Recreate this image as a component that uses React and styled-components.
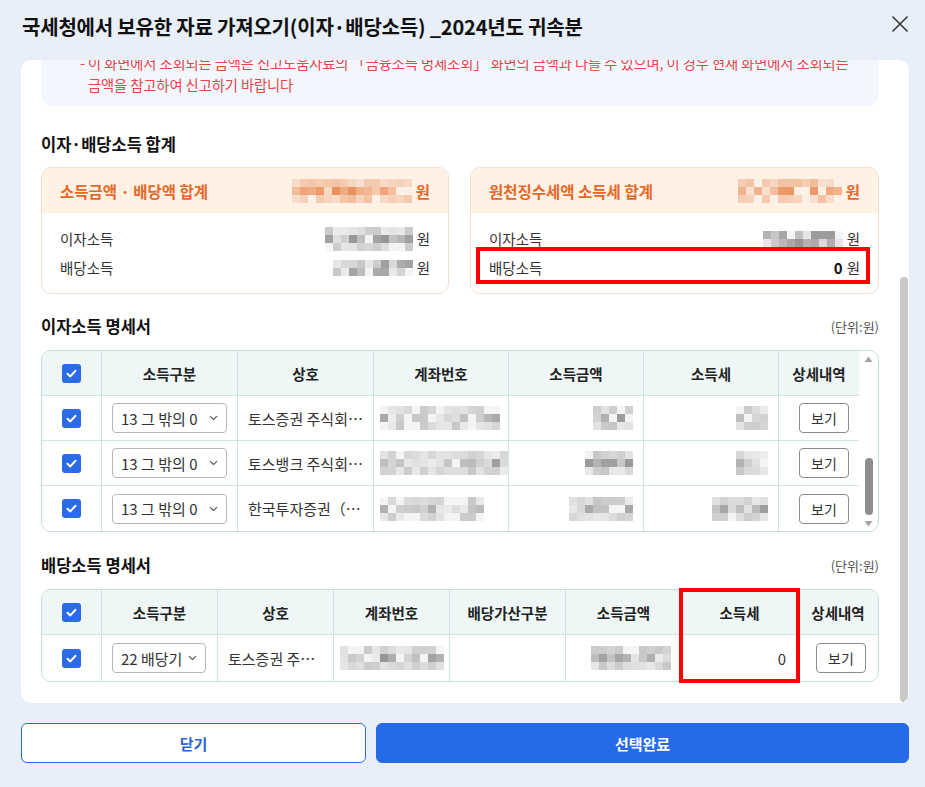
import React from 'react';
import styled, { createGlobalStyle } from 'styled-components';

const GlobalStyle = createGlobalStyle`
  html, body { margin: 0; padding: 0; }
  body {
    background: #e9eff9;
    font-family: "Noto Sans CJK KR", "Noto Sans", sans-serif;
    color: #222;
  }
  * { box-sizing: border-box; }
`;

const Modal = styled.div`
  width: 925px;
  height: 787px;
  display: flex;
  flex-direction: column;
  padding: 0 16px 0 21px;
`;

const Header = styled.header`
  height: 52px;
  margin-bottom: 8px;
  display: flex;
  align-items: center;
  justify-content: space-between;
  padding-left: 1px;
`;

const Title = styled.h1`
  margin: 0;
  font-size: 20px;
  font-weight: 700;
  color: #111;
  letter-spacing: -0.2px;
`;

const CloseBtn = styled.button`
  border: 0;
  background: none;
  padding: 0;
  width: 20px;
  height: 20px;
  margin: -4px -1px 0 0;
  display: flex;
  align-items: center;
  justify-content: center;
`;

const Panel = styled.div`
  height: 643px;
  background: #fff;
  border-radius: 10px;
  overflow: hidden;
  display: flex;
`;

const Viewport = styled.div`
  flex: 1;
  min-width: 0;
  display: flex;
  flex-direction: column;
  justify-content: flex-end;
  overflow: hidden;
  padding: 0 20px 21px 20px;
`;

const PanelRail = styled.div`
  width: 10px;
  display: flex;
  flex-direction: column;
  justify-content: flex-end;
  padding: 0 1px 1px;
`;

const PanelThumb = styled.div`
  height: 425px;
  border-radius: 4px;
  background: #c9c9c9;
`;

const Notice = styled.div`
  flex-shrink: 0;
  background: #f3f6fc;
  border-radius: 12px;
  padding: 16px 20px 10px 39px;
`;

const NoticeLine = styled.p`
  margin: 0;
  font-size: 14.3px;
  line-height: 22px;
  color: #e2474b;
  padding-left: 8px;
  text-indent: -8px;
  letter-spacing: -0.1px;
`;

const SectionTitle = styled.h2`
  margin: 26px 0 11px;
  font-size: 16.5px;
  line-height: 24px;
  font-weight: 700;
  color: #111;
`;

const SectionHead = styled.div`
  flex-shrink: 0;
  display: flex;
  align-items: center;
  justify-content: space-between;
  margin: ${p => p.$mt}px 0 12px;
  height: 24px;
  & > h2 { margin: 0; }
`;

const Unit = styled.span`
  font-size: 13px;
  color: #555;
`;

const CardGrid = styled.div`
  flex-shrink: 0;
  display: grid;
  grid-template-columns: 408px 1fr;
  gap: 21px;
`;

const Card = styled.div`
  border: 1px solid #f0dfd0;
  border-radius: 10px;
  overflow: hidden;
`;

const CardHead = styled.div`
  height: 45px;
  background: #fff1e4;
  display: flex;
  align-items: center;
  justify-content: space-between;
  padding: 0 18px;
  color: #e4692a;
  font-size: 15.5px;
  font-weight: 700;
`;

const CardBody = styled.div`
  padding: 11px 18px 11px;
`;

const CardRow = styled.div`
  position: relative;
  height: 29px;
  display: flex;
  align-items: center;
  justify-content: space-between;
  font-size: 14.5px;
  color: #333;
`;

const Amount = styled.span`
  display: flex;
  align-items: center;
  gap: 4px;
`;

const Strong = styled.b`
  font-weight: 700;
  font-size: 15px;
  color: #111;
`;

const Highlight = styled.span`
  position: absolute;
  border: 4px solid #ff0000;
  pointer-events: none;
  top: ${p => p.$top}px;
  left: ${p => p.$left}px;
  right: ${p => p.$right}px;
  bottom: ${p => p.$bottom}px;
`;

const ColHighlight = styled.span`
  position: absolute;
  border: 4px solid #ff0000;
  pointer-events: none;
  top: -1px;
  left: 638px;
  width: 121px;
  height: 95px;
`;

const TableWrap = styled.div`
  flex-shrink: 0;
  position: relative;
`;

const TableFrame = styled.div`
  border: 1px solid #c6dcdc;
  border-radius: 10px;
  overflow: hidden;
  display: flex;
`;

const Rows = styled.div`
  flex: 1;
  display: flex;
  flex-direction: column;
`;

const Row = styled.div`
  display: grid;
  grid-template-columns: ${p => p.$cols};
  height: ${p => p.$h}px;
  border-bottom: 1px solid #d1e2e2;
  background: ${p => (p.$head ? '#eef7f6' : '#fff')};
  &:last-child { border-bottom: 0; }
`;

const Cell = styled.div`
  display: flex;
  align-items: center;
  justify-content: ${p => p.$align || 'center'};
  padding: ${p => p.$pad || '0 10px'};
  border-right: 1px solid #d1e2e2;
  overflow: hidden;
  white-space: nowrap;
  font-size: ${p => (p.$head ? '14.5px' : '15px')};
  font-weight: ${p => (p.$head ? 700 : 400)};
  color: ${p => (p.$head ? '#222' : '#333')};
  &:last-child { border-right: 0; }
`;

const Rail = styled.div`
  width: 19px;
  display: flex;
  flex-direction: column;
  align-items: center;
  background: #fff;
  padding: 5px 0 4px;
`;

const Thumb = styled.div`
  margin-top: auto;
  margin-bottom: 5px;
  width: 8px;
  height: 57px;
  border-radius: 4px;
  background: #8d8d8d;
`;

const Box = styled.span`
  width: 19px;
  height: 19px;
  border-radius: 3px;
  background: #2c6be6;
  display: flex;
  align-items: center;
  justify-content: center;
`;

const SelectBox = styled.div`
  width: ${p => p.$w}px;
  height: 30px;
  border: 1px solid #b6b6b6;
  border-radius: 4px;
  background: #fff;
  display: flex;
  align-items: center;
  justify-content: space-between;
  padding: 0 8px 0 8px;
  font-size: 15px;
  color: #333;
`;

const DetailBtn = styled.button`
  width: 50px;
  height: 30px;
  border: 1px solid #8c8c8c;
  border-radius: 4px;
  background: #fff;
  font-family: inherit;
  font-size: 14px;
  color: #333;
  padding: 0;
`;

const MosaicGrid = styled.span`
  display: grid;
  grid-template-columns: repeat(${p => p.$cols}, ${p => p.$cell}px);
  grid-auto-rows: ${p => p.$cell}px;
`;

const Footer = styled.div`
  display: grid;
  grid-template-columns: 345px 1fr;
  gap: 10px;
  padding-top: 20px;
`;

const FooterBtn = styled.button`
  height: 40px;
  border-radius: 6px;
  font-family: inherit;
  font-size: 15px;
  font-weight: 700;
  border: 1px solid #2a6be4;
  background: ${p => (p.$primary ? '#256be8' : '#fff')};
  color: ${p => (p.$primary ? '#fff' : '#2a63d3')};
`;

function rnd(seed, i) {
  const x = Math.sin(seed * 9301 + i * 49297 + 0.5) * 233280;
  return x - Math.floor(x);
}

function Mosaic({ w, h, cell = 8, tone = 'gray', seed = 1 }) {
  const cols = Math.max(1, Math.round(w / cell));
  const rows = Math.max(1, Math.round(h / cell));
  const cells = [];
  for (let r = 0; r < rows; r++) {
    for (let c = 0; c < cols; c++) {
      const i = r * cols + c;
      const a = rnd(seed, i);
      const b = rnd(seed + 7, i);
      const edge = rows > 2 && (r === 0 || r === rows - 1) ? 0.4 : 0.9;
      let bg;
      if (b < 0.12) {
        bg = tone === 'orange' ? '#fdf0e6' : '#f3f4f5';
      } else if (tone === 'orange') {
        const t = a * edge;
        const R = Math.round(249 + (233 - 249) * t);
        const G = Math.round(226 + (135 - 226) * t);
        const B = Math.round(210 + (79 - 210) * t);
        bg = `rgb(${R},${G},${B})`;
      } else {
        const t = a * edge;
        const v = Math.round(236 - t * 95);
        bg = `rgb(${v},${v},${v + 3})`;
      }
      cells.push(<span key={i} style={{ background: bg }} />);
    }
  }
  return (
    <MosaicGrid $cols={cols} $cell={cell}>
      {cells}
    </MosaicGrid>
  );
}

const Check = () => (
  <Box>
    <svg width="13" height="13" viewBox="0 0 13 13">
      <path d="M2.5 6.8 L5.3 9.4 L10.5 3.8" fill="none" stroke="#fff" strokeWidth="2" strokeLinecap="round" strokeLinejoin="round" />
    </svg>
  </Box>
);

const Chevron = () => (
  <svg width="9" height="6" viewBox="0 0 9 6">
    <path d="M1 1.2 L4.5 4.5 L8 1.2" fill="none" stroke="#555" strokeWidth="1.1" />
  </svg>
);

const Select = ({ w, text }) => (
  <SelectBox $w={w}>
    <span>{text}</span>
    <Chevron />
  </SelectBox>
);

const Tri = ({ up }) => (
  <svg width="9" height="7" viewBox="0 0 9 7">
    <path d={up ? 'M4.5 0.5 L8.5 6 L0.5 6 Z' : 'M0.5 1 L8.5 1 L4.5 6.5 Z'} fill="#a3a3a3" />
  </svg>
);

const COLS1 = '60px 136px 136px 135px 135px 135px 80px';
const COLS2 = '60px 116px 116px 116px 116px 116px 116px 80px';

const interestRows = [
  { name: '토스증권 주식회…', acc: 120, accS: 11, amt: 42, amtS: 21, tax: 28, taxS: 31 },
  { name: '토스뱅크 주식회…', acc: 124, accS: 12, amt: 46, amtS: 22, tax: 32, taxS: 32 },
  { name: '한국투자증권（…', acc: 104, accS: 13, amt: 64, amtS: 23, tax: 56, taxS: 33 },
];

export default function App() {
  return (
    <>
      <GlobalStyle />
      <Modal>
        <Header>
          <Title>국세청에서 보유한 자료 가져오기(이자·배당소득) _2024년도 귀속분</Title>
          <CloseBtn aria-label="닫기">
            <svg width="18" height="18" viewBox="0 0 18 18">
              <path d="M1.5 1.5 L16.5 16.5 M16.5 1.5 L1.5 16.5" stroke="#333" strokeWidth="1.5" fill="none" />
            </svg>
          </CloseBtn>
        </Header>

        <Panel>
          <Viewport>
            <Notice>
              <NoticeLine>
                - 이 화면에서 조회되는 금액은 신고도움자료의 「금융소득 명세조회」 화면의 금액과 다를 수 있으며, 이 경우 현재 화면에서 조회되는
                <br />
                금액을 참고하여 신고하기 바랍니다
              </NoticeLine>
            </Notice>

            <SectionTitle>이자·배당소득 합계</SectionTitle>
            <CardGrid>
              <Card>
                <CardHead>
                  <span>소득금액 · 배당액 합계</span>
                  <Amount>
                    <Mosaic w={120} h={24} tone="orange" seed={3} />
                    <span>원</span>
                  </Amount>
                </CardHead>
                <CardBody>
                  <CardRow>
                    <span>이자소득</span>
                    <Amount>
                      <Mosaic w={88} h={24} seed={4} />
                      <span>원</span>
                    </Amount>
                  </CardRow>
                  <CardRow>
                    <span>배당소득</span>
                    <Amount>
                      <Mosaic w={80} h={16} seed={5} />
                      <span>원</span>
                    </Amount>
                  </CardRow>
                </CardBody>
              </Card>
              <Card>
                <CardHead>
                  <span>원천징수세액 소득세 합계</span>
                  <Amount>
                    <Mosaic w={104} h={24} tone="orange" seed={6} />
                    <span>원</span>
                  </Amount>
                </CardHead>
                <CardBody>
                  <CardRow>
                    <span>이자소득</span>
                    <Amount>
                      <Mosaic w={80} h={16} seed={8} />
                      <span>원</span>
                    </Amount>
                  </CardRow>
                  <CardRow>
                    <span>배당소득</span>
                    <Amount>
                      <Strong>0</Strong>
                      <span>원</span>
                    </Amount>
                    <Highlight $top={-6} $left={-13} $right={-10} $bottom={-2} />
                  </CardRow>
                </CardBody>
              </Card>
            </CardGrid>

            <SectionHead $mt={20}>
              <SectionTitle as="h2">이자소득 명세서</SectionTitle>
              <Unit>(단위:원)</Unit>
            </SectionHead>
            <TableWrap>
              <TableFrame>
                <Rows>
                  <Row $cols={COLS1} $h={45} $head>
                    <Cell $head><Check /></Cell>
                    <Cell $head>소득구분</Cell>
                    <Cell $head>상호</Cell>
                    <Cell $head>계좌번호</Cell>
                    <Cell $head>소득금액</Cell>
                    <Cell $head>소득세</Cell>
                    <Cell $head>상세내역</Cell>
                  </Row>
                  {interestRows.map((r, i) => (
                    <Row key={i} $cols={COLS1} $h={45}>
                      <Cell><Check /></Cell>
                      <Cell><Select w={115} text="13 그 밖의 0" /></Cell>
                      <Cell $align="flex-start">{r.name}</Cell>
                      <Cell $align="flex-start" $pad="0 6px"><Mosaic w={r.acc} h={24} seed={r.accS} /></Cell>
                      <Cell $align="flex-end"><Mosaic w={r.amt} h={24} seed={r.amtS} /></Cell>
                      <Cell $align="flex-end"><Mosaic w={r.tax} h={24} seed={r.taxS} /></Cell>
                      <Cell $align="flex-end"><DetailBtn>보기</DetailBtn></Cell>
                    </Row>
                  ))}
                </Rows>
                <Rail>
                  <Tri up />
                  <Thumb />
                  <Tri />
                </Rail>
              </TableFrame>
            </TableWrap>

            <SectionHead $mt={21}>
              <SectionTitle as="h2">배당소득 명세서</SectionTitle>
              <Unit>(단위:원)</Unit>
            </SectionHead>
            <TableWrap>
              <TableFrame>
                <Rows>
                  <Row $cols={COLS2} $h={45} $head>
                    <Cell $head><Check /></Cell>
                    <Cell $head>소득구분</Cell>
                    <Cell $head>상호</Cell>
                    <Cell $head>계좌번호</Cell>
                    <Cell $head>배당가산구분</Cell>
                    <Cell $head>소득금액</Cell>
                    <Cell $head>소득세</Cell>
                    <Cell $head>상세내역</Cell>
                  </Row>
                  <Row $cols={COLS2} $h={46}>
                    <Cell><Check /></Cell>
                    <Cell $align="flex-start"><Select w={94} text="22 배당기" /></Cell>
                    <Cell $align="flex-start">토스증권 주…</Cell>
                    <Cell $align="flex-start" $pad="0 6px"><Mosaic w={100} h={24} seed={41} /></Cell>
                    <Cell />
                    <Cell $align="flex-end"><Mosaic w={80} h={24} seed={43} /></Cell>
                    <Cell $align="flex-end" $pad="0 11px">0</Cell>
                    <Cell $align="flex-end" $pad="0 12px"><DetailBtn>보기</DetailBtn></Cell>
                  </Row>
                </Rows>
              </TableFrame>
              <ColHighlight />
            </TableWrap>
          </Viewport>
          <PanelRail>
            <PanelThumb />
          </PanelRail>
        </Panel>

        <Footer>
          <FooterBtn>닫기</FooterBtn>
          <FooterBtn $primary>선택완료</FooterBtn>
        </Footer>
      </Modal>
    </>
  );
}
